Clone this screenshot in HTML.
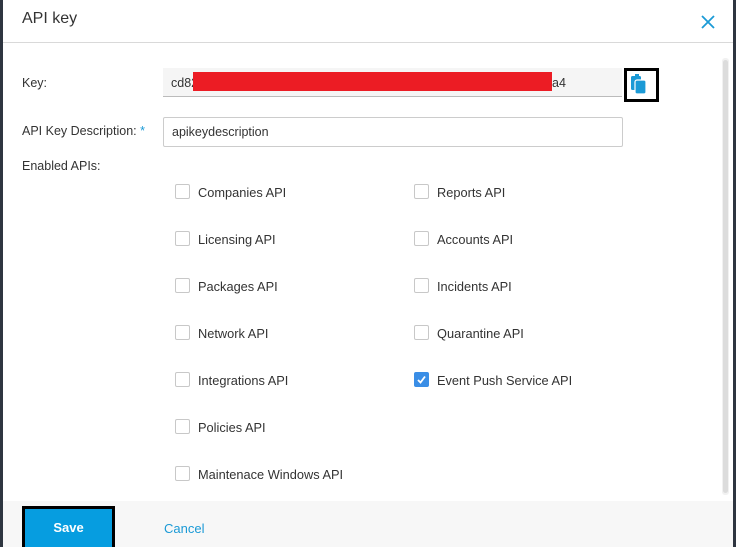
<!DOCTYPE html>
<html><head><style>
body{margin:0;width:736px;height:547px;background:#2e3540;font-family:"Liberation Sans",sans-serif;position:relative;overflow:hidden;color:#333}
.dlg{position:absolute;left:3px;top:0;width:730px;height:547px;background:#fff}
.a{position:absolute}
.lbl{font-size:12.5px;color:#333}
.cb{position:absolute;width:13px;height:13px;border:1px solid #c8c8c8;border-radius:2px;background:#fff}
.ct{position:absolute;font-size:12.8px;color:#333}
</style></head><body>
<div class="dlg">
<div class="a" style="left:19px;top:10px;font-size:16px;color:#333">API key</div>
<svg class="a" style="left:698px;top:15px" width="14" height="14"><path d="M1 1L13 13M13 1L1 13" stroke="#1b9ad6" stroke-width="1.8"/></svg>
<div class="a" style="left:0;top:42px;width:730px;height:1px;background:#d9d9d9"></div>
<div class="a" style="left:719px;top:58px;width:7px;height:437px;background:#f1f1f1;border-radius:3px"></div>
<div class="a" style="left:720px;top:60px;width:5px;height:433px;background:#dcdcdc;border-radius:3px"></div>

<div class="a lbl" style="left:19px;top:76px">Key:</div>
<div class="a" style="left:160px;top:68px;width:459px;height:28px;background:#f5f5f5;border-bottom:1px solid #bbb"></div>
<div class="a" style="left:168px;top:76px;font-size:12.5px;color:#333">cd82</div>
<div class="a" style="left:190px;top:72px;width:359px;height:19px;background:#ec1c24"></div>
<div class="a" style="left:549px;top:76px;font-size:12.5px;color:#333">a4</div>
<div class="a" style="left:621px;top:68px;width:29px;height:28px;border:3px solid #000;background:#fff"></div>
<svg class="a" style="left:627px;top:73px" width="18" height="22"><rect x="5" y="1" width="4" height="4" fill="#1b9ad6"/><rect x="1" y="3" width="10" height="14" rx="1.5" fill="#1b9ad6"/><rect x="5" y="7" width="11" height="14" rx="2" fill="#1b9ad6" stroke="#fff" stroke-width="1.2"/></svg>

<div class="a lbl" style="left:19px;top:124px">API Key Description: <span style="color:#1b9ad6">*</span></div>
<div class="a" style="left:160px;top:117px;width:458px;height:28px;border:1px solid #ccc;border-radius:2px"></div>
<div class="a" style="left:169px;top:125px;font-size:12.5px;color:#333">apikeydescription</div>
<div class="a lbl" style="left:19px;top:159px">Enabled APIs:</div>

<div class="cb" style="left:172px;top:184px"></div><div class="ct" style="left:195px;top:185px">Companies API</div>
<div class="cb" style="left:172px;top:231px"></div><div class="ct" style="left:195px;top:232px">Licensing API</div>
<div class="cb" style="left:172px;top:278px"></div><div class="ct" style="left:195px;top:279px">Packages API</div>
<div class="cb" style="left:172px;top:325px"></div><div class="ct" style="left:195px;top:326px">Network API</div>
<div class="cb" style="left:172px;top:372px"></div><div class="ct" style="left:195px;top:373px">Integrations API</div>
<div class="cb" style="left:172px;top:419px"></div><div class="ct" style="left:195px;top:420px">Policies API</div>
<div class="cb" style="left:172px;top:466px"></div><div class="ct" style="left:195px;top:467px">Maintenace Windows API</div>

<div class="cb" style="left:411px;top:184px"></div><div class="ct" style="left:434px;top:185px">Reports API</div>
<div class="cb" style="left:411px;top:231px"></div><div class="ct" style="left:434px;top:232px">Accounts API</div>
<div class="cb" style="left:411px;top:278px"></div><div class="ct" style="left:434px;top:279px">Incidents API</div>
<div class="cb" style="left:411px;top:325px"></div><div class="ct" style="left:434px;top:326px">Quarantine API</div>
<div class="cb" style="left:411px;top:372px;background:#3a8ee6;border-color:#3a8ee6"><svg width="13" height="13" style="position:absolute;left:0;top:0"><path d="M3 7L5.5 9.5L10 3.5" stroke="#fff" stroke-width="1.8" fill="none"/></svg></div><div class="ct" style="left:434px;top:373px">Event Push Service API</div>

<div class="a" style="left:0;top:501px;width:730px;height:46px;background:#f7f7f7"></div>
<div class="a" style="left:19px;top:506px;width:87px;height:38px;border:3px solid #000;border-bottom:0;background:#069de0;color:#fff;font-weight:bold;font-size:13px;text-align:center;line-height:38px">Save</div>
<div class="a" style="left:161px;top:521px;font-size:13px;color:#1b9ad6">Cancel</div>
</div>
</body></html>
